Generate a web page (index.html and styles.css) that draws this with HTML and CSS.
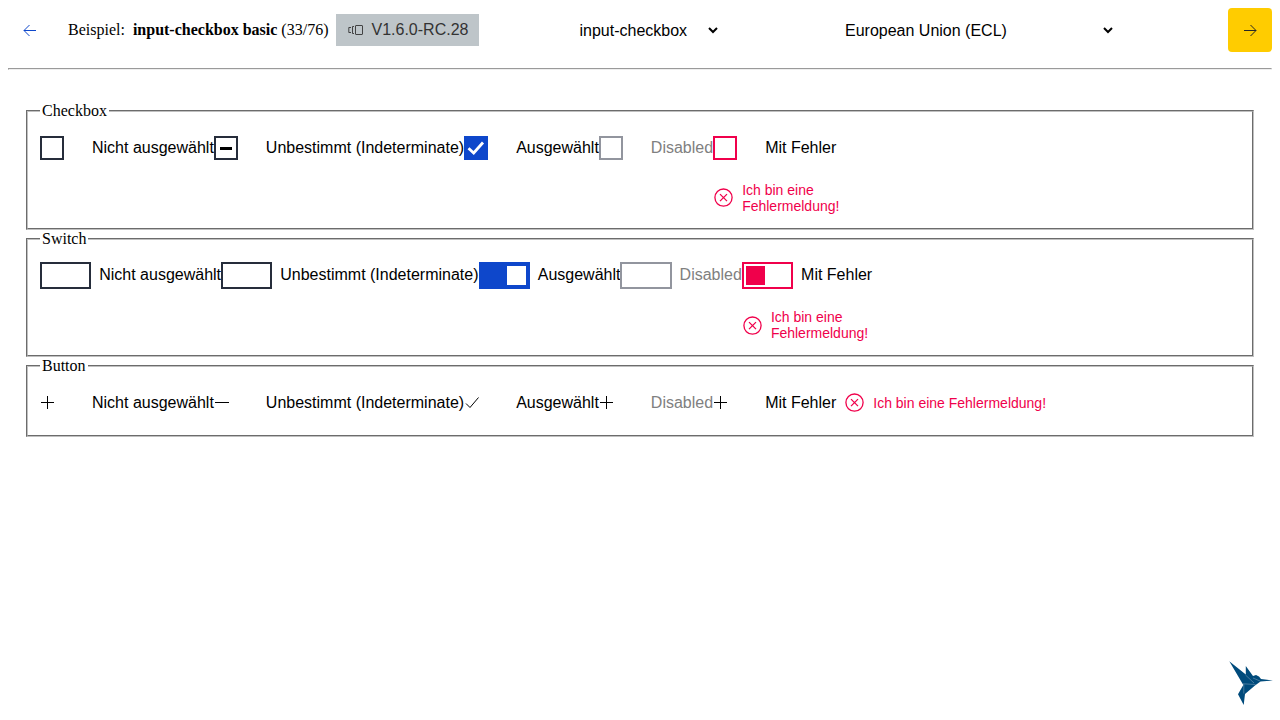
FILE: index.html
```
<!DOCTYPE html>
<html lang="de">
<head>
<meta charset="utf-8">
<title>input-checkbox basic</title>
<link rel="stylesheet" href="styles.css">
</head>
<body>
<svg class="defs" width="0" height="0">
  <symbol id="plus" viewBox="0 0 16 16"><path d="M1 7.5H14M7.5 1V14"/></symbol>
  <symbol id="error" viewBox="0 0 20 20"><circle cx="10.5" cy="9.6" r="8.6"/><path d="M7 6.1l7 7M14 6.1l-7 7"/></symbol>
</svg>
<header class="header">
  <a class="nav-button"><svg width="16" height="16" viewBox="0 0 16 16"><path d="M14 8.5H2M7.5 3L2 8.5L7.5 14"/></svg></a>
  <div class="example">Beispiel:&nbsp; <b>input-checkbox basic</b> (33/76)</div>
  <div class="version"><svg width="16" height="16" viewBox="0 0 16 16"><rect x="7.5" y="3.5" width="7" height="9" rx=".5"/><path d="M6 4.5H4.5V11.5H6M3 5.5H.8V10.5H3" /></svg><span>V1.6.0-RC.28</span></div>
  <div class="select component"><span>input-checkbox</span><svg width="10" height="8" viewBox="0 0 10 8"><path d="M1 2l4 4l4-4"/></svg></div>
  <div class="select theme"><span>European Union (ECL)</span><svg width="10" height="8" viewBox="0 0 10 8"><path d="M1 2l4 4l4-4"/></svg></div>
  <a class="nav-button next"><svg width="16" height="16" viewBox="0 0 16 16"><path d="M2 8.5H14M8.5 3L14 8.5L8.5 14"/></svg></a>
</header>
<hr class="divider">
<main class="main">
  <fieldset class="group group-checkbox">
    <legend>Checkbox</legend>
    <div class="items">
      <div class="item"><div class="row"><i class="box"></i><span>Nicht ausgewählt</span></div></div>
      <div class="item"><div class="row"><i class="box"><i class="dash"></i></i><span>Unbestimmt (Indeterminate)</span></div></div>
      <div class="item"><div class="row"><i class="box checked"><svg width="24" height="24" viewBox="0 0 24 24"><path d="M4.5 12.2l5.2 4.8L19 6.5"/></svg></i><span>Ausgewählt</span></div></div>
      <div class="item disabled"><div class="row"><i class="box"></i><span>Disabled</span></div></div>
      <div class="item invalid"><div class="row"><i class="box"></i><span>Mit Fehler</span></div>
        <div class="message"><svg width="20" height="20"><use href="#error"/></svg><span>Ich bin eine Fehlermeldung!</span></div></div>
    </div>
  </fieldset>
  <fieldset class="group group-switch">
    <legend>Switch</legend>
    <div class="items">
      <div class="item"><div class="row"><i class="switch"></i><span>Nicht ausgewählt</span></div></div>
      <div class="item"><div class="row"><i class="switch"></i><span>Unbestimmt (Indeterminate)</span></div></div>
      <div class="item"><div class="row"><i class="switch on"><i class="knob"></i></i><span>Ausgewählt</span></div></div>
      <div class="item disabled"><div class="row"><i class="switch"></i><span>Disabled</span></div></div>
      <div class="item invalid"><div class="row"><i class="switch"><i class="knob"></i></i><span>Mit Fehler</span></div>
        <div class="message"><svg width="20" height="20"><use href="#error"/></svg><span>Ich bin eine Fehlermeldung!</span></div></div>
    </div>
  </fieldset>
  <fieldset class="group group-button">
    <legend>Button</legend>
    <div class="items">
      <div class="item"><div class="row"><i class="glyph"><svg width="16" height="16"><use href="#plus"/></svg></i><span>Nicht ausgewählt</span></div></div>
      <div class="item"><div class="row"><i class="glyph"><svg width="16" height="16" viewBox="0 0 16 16"><path d="M1 7.5H15"/></svg></i><span>Unbestimmt (Indeterminate)</span></div></div>
      <div class="item"><div class="row"><i class="glyph"><svg width="16" height="16" viewBox="0 0 16 16"><path d="M2 8.5l4 4L14.5 2.5"/></svg></i><span>Ausgewählt</span></div></div>
      <div class="item disabled"><div class="row"><i class="glyph"><svg width="16" height="16"><use href="#plus"/></svg></i><span>Disabled</span></div></div>
      <div class="item invalid inline"><div class="row"><i class="glyph"><svg width="16" height="16"><use href="#plus"/></svg></i><span>Mit Fehler</span></div>
        <div class="message"><svg width="20" height="20"><use href="#error"/></svg><span>Ich bin eine Fehlermeldung!</span></div></div>
    </div>
  </fieldset>
</main>
<svg class="bird" width="46" height="46" viewBox="0 0 46 46"><path class="body" d="M1.3 1.3L17.8 14.5L17.8 6L25 16L28 15L31 16.5L33 18.9L45 20.5L32.5 21.5L27 25.5L17 34L15.7 45L10 34.3L15.3 25Z"/><path class="seam" d="M15 23.8L27.5 24.5M17.5 15L26 23M15.8 24V33.5M25 18L32 21"/></svg>
</body>
</html>
```
FILE: styles.css
```
body { margin: 8px; background: #fff; color: #000; font: 16px "Liberation Serif", serif; }
svg { display: block; flex: none; fill: none; stroke: currentColor; stroke-width: 1; }
i { display: block; box-sizing: border-box; flex: none; }
.defs { position: absolute; }
.header { display: flex; height: 44px; white-space: nowrap; }
.nav-button { width: 44px; height: 44px; display: flex; align-items: center; justify-content: center; flex: none; color: #0e47cb; }
.next { margin-left: auto; background: #ffcc00; color: #262626; border-radius: 4px; }
.example { width: 268px; margin-left: 16px; line-height: 44px; }
.version { display: flex; align-items: center; gap: 8.5px; box-sizing: border-box; width: 143px; height: 32px; margin-top: 6px; padding-left: 11px; background: #bec5c9; color: #333; font-family: "Liberation Sans", sans-serif; }
.version svg { stroke-width: .9; margin-left: 0.5px; margin-right: -0.5px; }
.version span { line-height: 32px; }
.select { display: flex; align-items: center; justify-content: space-between; font-family: "Liberation Sans", sans-serif; height: 44px; }
.select span { padding-top: 2px; }
.select svg { stroke-width: 2; }
.component { width: 138.5px; margin-left: 100.5px; }
.theme { width: 268px; margin-left: 127px; }
.divider { margin: 16px 0 0; border: 1px solid; border-color: #9a9a9a #eee #eee #9a9a9a; }
.main { padding: 32px 16px 0; }
.group { box-sizing: border-box; margin: 0 2px; padding: 5.6px 12px 0; border: 2px groove #c0c0c0; }
.group legend { padding: 0 2px; line-height: 18px; }
.group-checkbox { height: 128px; }
.group-switch { height: 127px; }
.group-button { height: 80px; }
.items { display: flex; font-family: "Liberation Sans", sans-serif; white-space: nowrap; }
.row { display: flex; align-items: center; height: 44px; }
.group-switch .row span { padding-bottom: 2px; }
.box { width: 24px; height: 24px; margin-right: 28px; border: 2px solid #262d3b; display: flex; align-items: center; justify-content: center; }
.dash { width: 12px; height: 3px; margin-top: 1px; background: #000; }
.checked { background: #0e47cb; border: 0; color: #fff; }
.checked svg { stroke-width: 2.8; }
.switch { width: 51.2px; height: 27px; margin-right: 8px; padding: 2px; border: 2px solid #262d3b; }
.knob { width: 19px; height: 19px; background: #f0004b; }
.on { background: #0e47cb; border-color: #0e47cb; }
.on .knob { margin-left: auto; background: #fff; }
.glyph { width: 24px; margin-right: 28px; }
.disabled .row span { color: #808080; }
.disabled .box, .disabled .switch { border-color: #92959e; }
.invalid .box, .invalid .switch { border-color: #f0004b; }
.message { display: flex; align-items: center; gap: 9px; width: 127px; margin-top: 12px; color: #f0004b; font-size: 14px; line-height: 16px; white-space: normal; }
.group-switch .message { margin-top: 11.5px; }
.message svg { stroke-width: 1.3; }
.group-switch .message svg { margin-top: 2px; }
.inline { display: flex; align-items: center; }
.inline .message { width: auto; margin: 0 0 0 8px; white-space: nowrap; }
.bird { position: fixed; right: 6px; bottom: 14px; }
.body { fill: #004b7c; stroke: none; }
.seam { stroke: #8ba9c0; stroke-width: .5; }
```
